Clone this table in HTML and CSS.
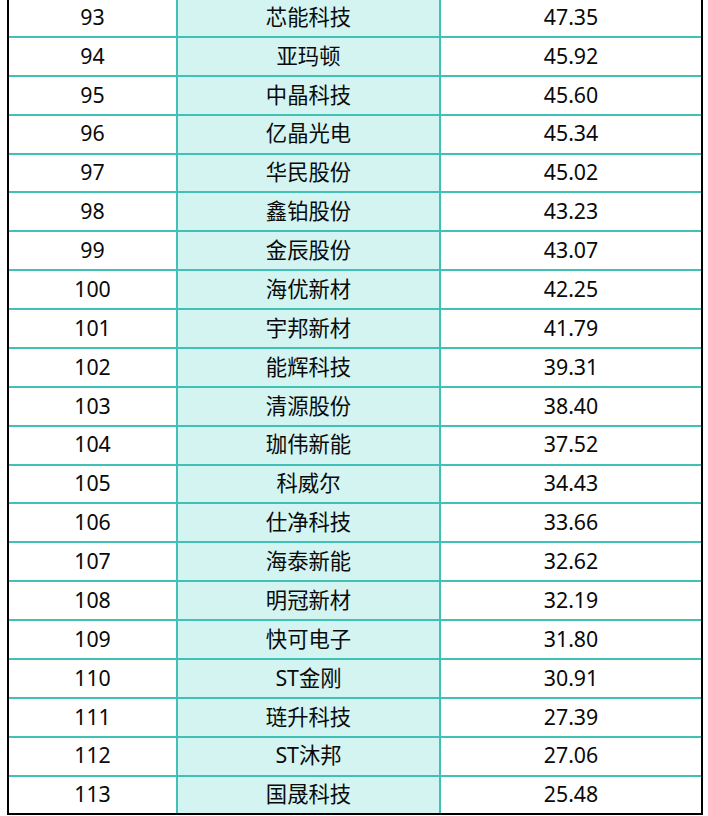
FILE: index.html
```html
<!DOCTYPE html>
<html lang="zh-CN">
<head>
<meta charset="utf-8">
<title>排名表</title>
<link rel="stylesheet" href="styles.css">
</head>
<body>
<table class="rank">
<tbody>
<tr><td>93</td><td class="name">芯能科技</td><td>47.35</td></tr>
<tr><td>94</td><td class="name">亚玛顿</td><td>45.92</td></tr>
<tr><td>95</td><td class="name">中晶科技</td><td>45.60</td></tr>
<tr><td>96</td><td class="name">亿晶光电</td><td>45.34</td></tr>
<tr><td>97</td><td class="name">华民股份</td><td>45.02</td></tr>
<tr><td>98</td><td class="name">鑫铂股份</td><td>43.23</td></tr>
<tr><td>99</td><td class="name">金辰股份</td><td>43.07</td></tr>
<tr><td>100</td><td class="name">海优新材</td><td>42.25</td></tr>
<tr><td>101</td><td class="name">宇邦新材</td><td>41.79</td></tr>
<tr><td>102</td><td class="name">能辉科技</td><td>39.31</td></tr>
<tr><td>103</td><td class="name">清源股份</td><td>38.40</td></tr>
<tr><td>104</td><td class="name">珈伟新能</td><td>37.52</td></tr>
<tr><td>105</td><td class="name">科威尔</td><td>34.43</td></tr>
<tr><td>106</td><td class="name">仕净科技</td><td>33.66</td></tr>
<tr><td>107</td><td class="name">海泰新能</td><td>32.62</td></tr>
<tr><td>108</td><td class="name">明冠新材</td><td>32.19</td></tr>
<tr><td>109</td><td class="name">快可电子</td><td>31.80</td></tr>
<tr><td>110</td><td class="name">ST金刚</td><td>30.91</td></tr>
<tr><td>111</td><td class="name">琏升科技</td><td>27.39</td></tr>
<tr><td>112</td><td class="name">ST沐邦</td><td>27.06</td></tr>
<tr><td>113</td><td class="name">国晟科技</td><td>25.48</td></tr>
</tbody>
</table>
</body>
</html>
```
FILE: styles.css
```css
html, body {
  margin: 0;
  padding: 0;
  background: #ffffff;
}

body {
  font-family: "Noto Sans", "Noto Sans CJK SC", sans-serif;
  font-size: 21.33px;
  color: #0a0a0a;
}

.rank {
  margin-top: -1px;
  margin-left: 7px;
  width: 696px;
  border-collapse: separate;
  border-spacing: 0;
  border-left: 2px solid #000000;
  border-right: 2px solid #000000;
  border-bottom: 2px solid #000000;
  table-layout: fixed;
}

.rank td {
  height: 34.88px;
  padding: 0 0 2px 0;
  text-align: center;
  vertical-align: middle;
  line-height: 1;
  border-bottom: 2px solid #3fc1b5;
}

.rank td:nth-child(1) {
  width: 167px;
}

.rank td:nth-child(2) {
  width: 261px;
}

.rank td + td {
  border-left: 2px solid #3fc1b5;
}

.rank tr:last-child td {
  border-bottom: none;
}

.rank .name {
  background: #d3f4f1;
}
```
